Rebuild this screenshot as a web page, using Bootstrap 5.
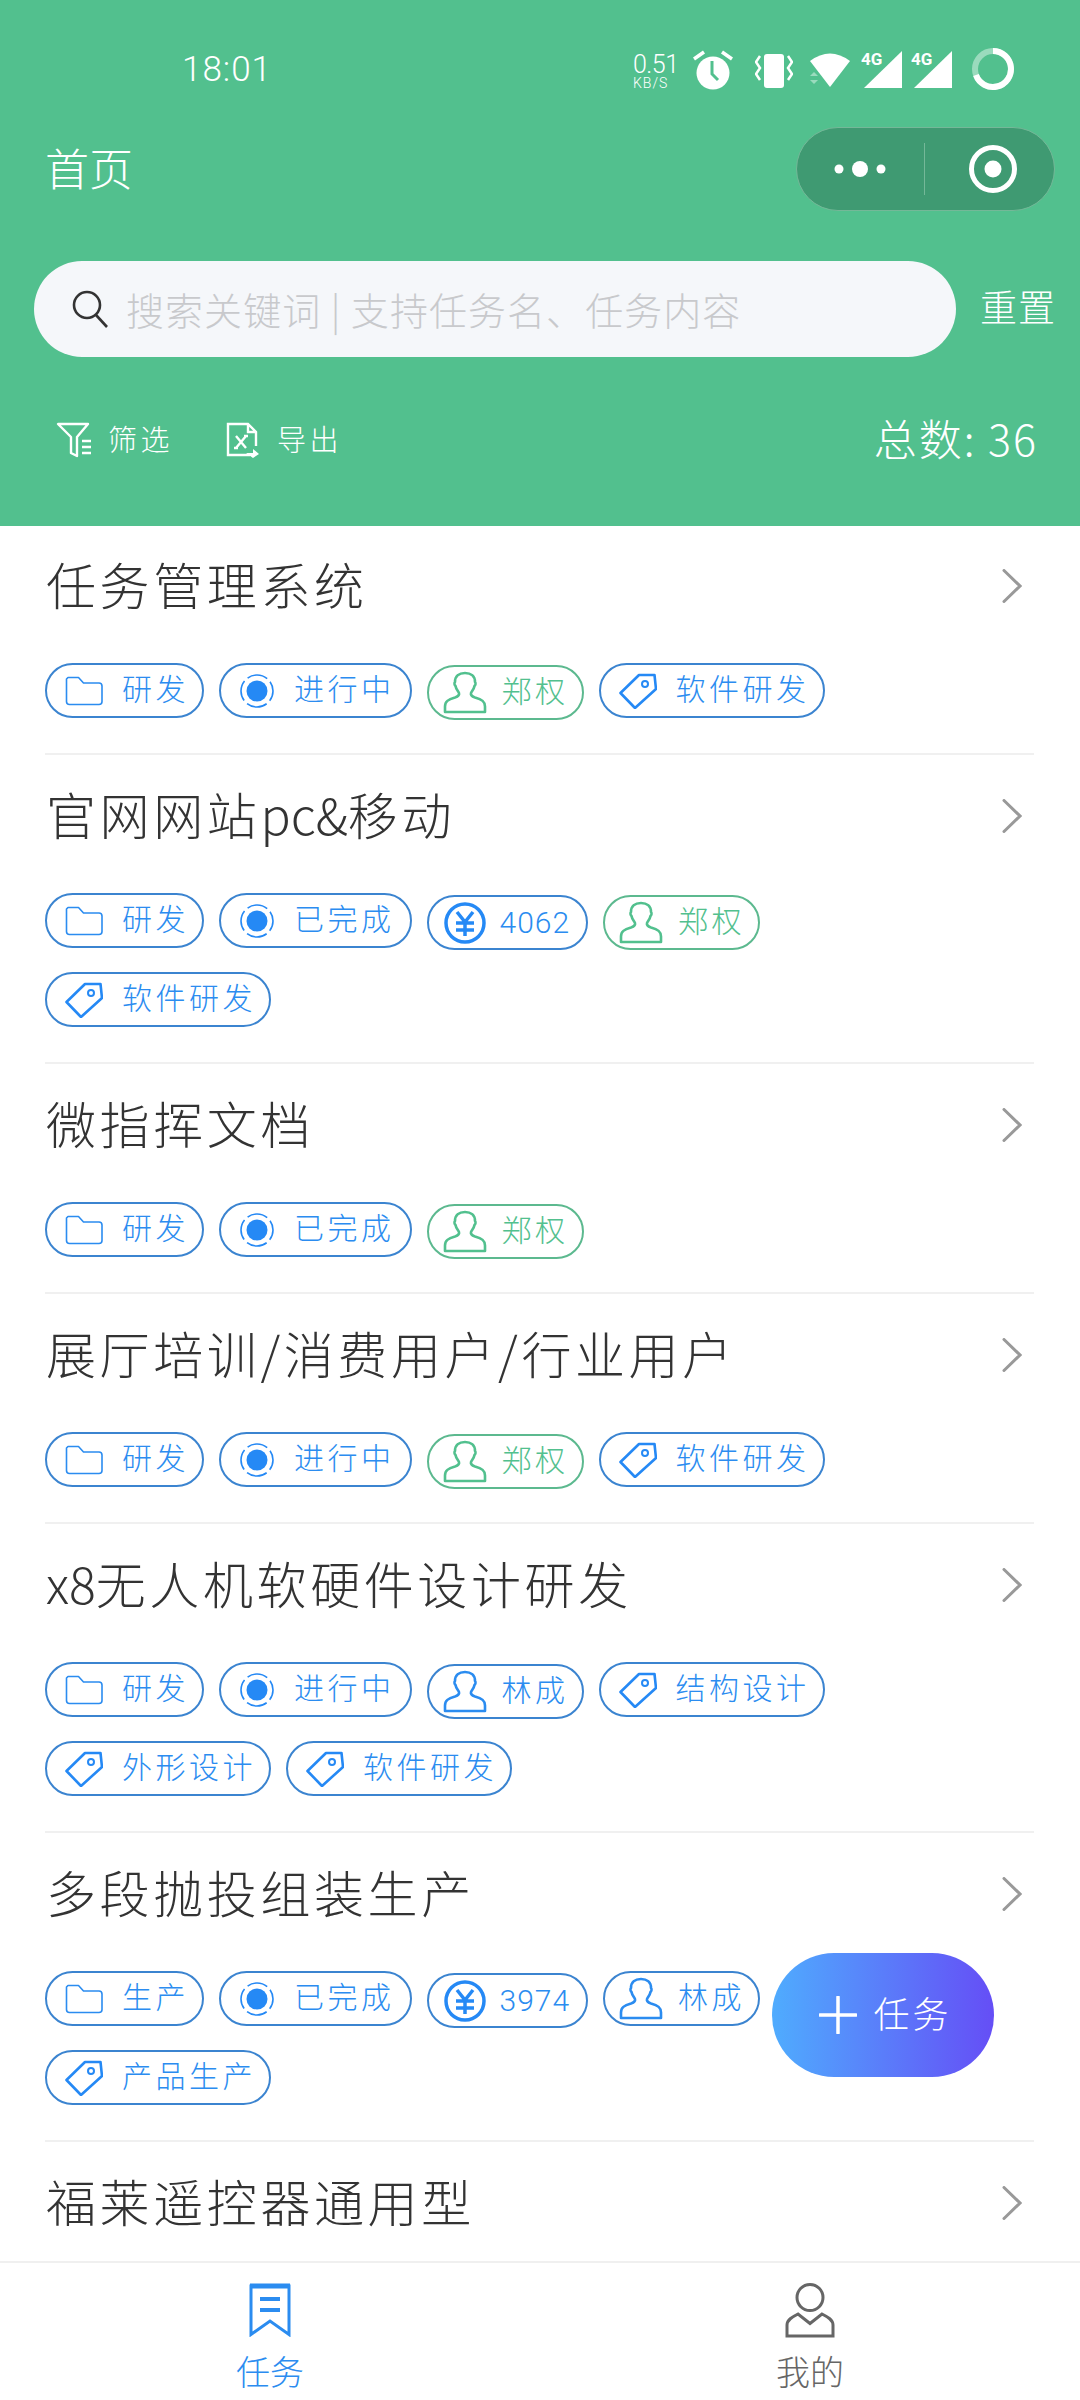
<!DOCTYPE html>
<html lang="zh"><head><meta charset="utf-8"><title>首页</title>
<link href="https://cdn.jsdelivr.net/npm/bootstrap@5.3.0/dist/css/bootstrap.min.css" rel="stylesheet">
<style>
html,body{height:2400px;overflow:hidden}
body{font-family:"Noto Sans CJK SC","Noto Sans",sans-serif;font-weight:300;background:#fff;color:#333}
.app{height:2400px;width:1080px;position:relative}
.hero{height:526px;background:#52c08e;color:#fff;flex:none;position:relative;z-index:2}
.sbar{height:127px;padding:50px 0 0 182px;align-items:flex-start}
.clock{font:300 35px/38px Roboto,sans-serif;letter-spacing:1px;width:451px;margin-top:1px}
.speed{width:60px;font-family:Roboto,sans-serif;line-height:1;text-align:left;margin-top:2px}
.speed b{display:block;font-weight:300;font-size:25px;letter-spacing:-.5px;height:24px}
.speed i{display:block;font-style:normal;font-size:14px;letter-spacing:1px;font-weight:300}
.st-vib{margin:3px 0 0 22px}
.st-wifi{margin:2px 0 0 16px}
.st-sig1{margin-left:10px}
.st-sig2{margin-left:8px}
.st-ring{margin:-3px 0 0 18px}
.navline{height:84px;padding:0 25px 0 45px}
.pagename{font-size:44px;line-height:60px;margin-top:-5px}
.capsule{width:259px;height:84px;background:#3f9a72;border:1px solid #74b898;border-radius:42px}
.capsule svg{display:block}
.searchline{margin-top:50px;padding:0 24px 0 34px;height:96px}
.searchbox{width:922px;height:96px;background:#f5f7fa;border-radius:48px;padding-left:38px;color:#c8c9cc;font-size:38px;line-height:96px}
.searchbox span{margin-left:18px;letter-spacing:1.05px}
.resetbtn{font-size:37px;letter-spacing:1px;margin-top:-4px}
.toolline{margin-top:61px;padding:0 42px 0 56px;height:44px}
.toolitem{font-size:29px;letter-spacing:3.5px;line-height:44px;padding-bottom:4px;margin-left:16px}
.tool-exp{margin-left:53px}
.tool-exp + .toolitem{margin-left:17px}
.totalnum{font-size:43px;line-height:50px;letter-spacing:2px;padding-bottom:6px}
.tasklist{flex:1 1 0;min-height:0;overflow:hidden;margin-top:-1px;padding:0 46px 0 45px}
.taskitem{border-bottom:2px solid #f0f0f0;padding:22px 0 35px}
.taskhead{height:72px;margin-bottom:44px}
.taskhead svg{margin:6px 12px 0 0;flex:none}
.taskname{font-size:50px;line-height:72px;letter-spacing:3.6px;color:#333;white-space:nowrap;padding-left:1px}
.taskname em{font-style:normal;letter-spacing:0}
.tagwrap{display:flex;flex-wrap:wrap;column-gap:15px;row-gap:24px;align-items:flex-start;width:950px}
.chip{height:55px;border:2px solid #3b84d0;border-radius:28px;color:#2b8cf0;display:inline-flex;align-items:center;font-size:30px;letter-spacing:3.5px;padding:0 13px 0 18px;white-space:nowrap;line-height:1}
.chip svg{flex:none;margin-right:19px}
.chip span{position:relative;top:-4px}
.chip.stat{padding-right:15px}
.chip.who{padding-left:14px}
.chip.who svg{margin-right:15px}
.chip.cost{padding-left:15px;padding-right:16px}
.chip.cost svg{margin-right:14px}
.chip.cost span{font-family:Roboto,sans-serif;letter-spacing:1px;top:0}
.chip.low{margin-top:2px;margin-bottom:-2px}
.chip.mate{border-color:#5cb98f;color:#52c08e}
.tabbar{height:139px;flex:none;border-top:2px solid #f0f0f0;background:#fff}
.tabcell{padding-top:20px;font-size:34px;line-height:36px;color:#666}
.tabcell.on{color:#2b8cf0}
.tabcell div{margin-top:14px}
.tabcell.on div{margin-top:16px}
.fabbtn{position:absolute;left:772px;top:1953px;width:222px;height:124px;border-radius:62px;background:linear-gradient(90deg,#4facfe,#654ef6);color:#fff;font-size:36px;letter-spacing:3px;z-index:3;padding-left:5px}
.fabbtn span{position:relative;top:-3px}
</style></head><body>
<svg width="0" height="0" class="position-absolute">
<defs>
<symbol id="i-folder" viewBox="0 0 38 30"><path d="M3 1.500h10.500l5 5.500H34a3 3 0 0 1 3 3v15.500a3 3 0 0 1-3 3H4.500a3 3 0 0 1-3-3V3z" fill="none" stroke="currentColor" stroke-width="1.600" stroke-linejoin="round"/></symbol>
<symbol id="i-status" viewBox="0 0 36 36"><circle cx="18" cy="18" r="10.500" fill="#2589f5"/><circle cx="18" cy="18" r="16" fill="none" stroke="#2589f5" stroke-width="1.600" stroke-dasharray="21 4.130" stroke-dashoffset="10.500"/></symbol>
<symbol id="i-user" viewBox="0 0 44 44"><path d="M22 2c6 0 10 3 10 9 1 1 .5 3-.5 4-.5 3-2.500 5-3.500 7-.5 2 1 3.500 4 4.500 7 2 10 4 10 9V41H2v-5.500c0-5 3-7 10-9 3-1 4.500-2.500 4-4.500-1-2-3-4-3.500-7-1-1-1.500-3-.5-4 0-6 4-9 10-9z" fill="none" stroke="currentColor" stroke-width="2.600" stroke-linejoin="round"/></symbol>
<symbol id="i-tag" viewBox="0 0 38 36"><path d="M1.500 20L20 2h15.500L37 16 16 35z" fill="none" stroke="#2589f5" stroke-width="2.600" stroke-linejoin="round"/><circle cx="26" cy="11" r="3" fill="none" stroke="#2589f5" stroke-width="2"/></symbol>
<symbol id="i-money" viewBox="0 0 42 42"><circle cx="21" cy="21" r="19" fill="none" stroke="#2589f5" stroke-width="3.500"/><path d="M13 10l8 10 8-10M12 21h18M12 28h18M21 20v14" fill="none" stroke="#2589f5" stroke-width="3.500"/></symbol>
<symbol id="i-chev" viewBox="0 0 20 34"><path d="M2 1.500l16 15.500L2 32.500" fill="none" stroke="#999" stroke-width="3" stroke-linecap="round"/></symbol>
</defs></svg>
<div class="app d-flex flex-column">
<div class="hero">
 <div class="sbar d-flex">
  <div class="clock">18:01</div>
  <div class="speed"><b>0.51</b><i>KB/S</i></div>
  <svg width="40" height="40" viewBox="0 0 40 40"><circle cx="20" cy="23" r="16.500" fill="#fff"/><path d="M1 9l10-7M39 9L29 2" stroke="#fff" stroke-width="3.500"/><path d="M19 11v13l6 6" stroke="#52c08e" stroke-width="3" fill="none"/></svg>
  <svg class="st-vib" width="38" height="36" viewBox="0 0 38 36"><rect x="9" y="1" width="20" height="34" rx="3" fill="#fff"/><path d="M5 3L1 9l4 6-4 6 4 6M33 3l4 6-4 6 4 6-4 6" fill="none" stroke="#fff" stroke-width="2.500"/></svg>
  <svg class="st-wifi" width="42" height="36" viewBox="0 0 42 36"><path d="M1 9Q21-6 41 9L21 35z" fill="#fff"/><path d="M1 24h8l-4-4zM1 28h8l-4 4z" fill="#9adbbd"/></svg>
  <svg class="st-sig1" width="42" height="40" viewBox="0 0 42 40"><path d="M41 1v37H3z" fill="#fff"/><text x="0" y="15" fill="#fff" font-family="Roboto" font-weight="700" font-size="17">4G</text></svg>
  <svg class="st-sig2" width="42" height="40" viewBox="0 0 42 40"><path d="M41 1v37H3z" fill="#fff"/><text x="0" y="15" fill="#fff" font-family="Roboto" font-weight="700" font-size="17">4G</text></svg>
  <svg class="st-ring" width="44" height="44" viewBox="0 0 44 44"><circle cx="22" cy="22" r="18" fill="none" stroke="#9adbbd" stroke-width="6"/><path d="M22 4a18 18 0 1 1-17 24" fill="none" stroke="#fff" stroke-width="6"/></svg>
 </div>
 <div class="navline d-flex justify-content-between align-items-center">
  <div class="pagename">首页</div>
  <div class="capsule d-flex align-items-center">
   <svg width="128" height="82" viewBox="0 0 128 82"><circle cx="42" cy="41" r="4.500" fill="#fff"/><circle cx="63" cy="41" r="8" fill="#fff"/><circle cx="84" cy="41" r="4.500" fill="#fff"/><path d="M127.500 15v52" stroke="#74b898"/></svg>
   <svg width="128" height="82" viewBox="0 0 128 82"><circle cx="68" cy="41" r="21.500" fill="none" stroke="#fff" stroke-width="5"/><circle cx="68" cy="41" r="8.500" fill="#fff"/></svg>
  </div>
 </div>
 <div class="searchline d-flex justify-content-between align-items-center">
  <div class="searchbox d-flex">
   <svg width="36" height="38" viewBox="0 0 36 38" class="align-self-center"><circle cx="15" cy="15" r="13" fill="none" stroke="#333" stroke-width="2.600"/><path d="M24 25l11 12" stroke="#333" stroke-width="2.600"/></svg>
   <span>搜索关键词 | 支持任务名、任务内容</span>
  </div>
  <div class="resetbtn">重置</div>
 </div>
 <div class="toolline d-flex align-items-center">
  <svg width="36" height="36" viewBox="0 0 36 36"><path d="M2 2h30L21 15v19l-6-3V15z" fill="none" stroke="#fff" stroke-width="2.400" stroke-linejoin="round"/><path d="M26 19h9M26 25h9M26 31h9" stroke="#fff" stroke-width="2.400"/></svg>
  <div class="toolitem">筛选</div>
  <svg class="tool-exp" width="34" height="36" viewBox="0 0 34 36"><path d="M24 33H2V2h20l8 8v14M22 2v8h8" fill="none" stroke="#fff" stroke-width="2.400"/><path d="M10 14l10 12M20 14L10 26M8 26h4M18 14h4" stroke="#fff" stroke-width="2.400" fill="none"/><path d="M20 31h7v-4l6 5-6 4z" fill="#fff"/></svg>
  <div class="toolitem">导出</div>
  <div class="totalnum ms-auto">总数: 36</div>
 </div>
</div>
<div class="tasklist">
 <div class="taskitem">
  <div class="taskhead d-flex justify-content-between align-items-center"><div class="taskname">任务管理系统</div><svg width="20" height="34"><use href="#i-chev"/></svg></div>
  <div class="tagwrap">
   <div class="chip"><svg width="38" height="30"><use href="#i-folder"/></svg><span>研发</span></div>
   <div class="chip stat"><svg width="36" height="36"><use href="#i-status"/></svg><span>进行中</span></div>
   <div class="chip who low mate"><svg width="44" height="44"><use href="#i-user"/></svg><span>郑权</span></div>
   <div class="chip"><svg width="38" height="36"><use href="#i-tag"/></svg><span>软件研发</span></div>
  </div>
 </div>
 <div class="taskitem">
  <div class="taskhead d-flex justify-content-between align-items-center"><div class="taskname">官网网站<em>pc&amp;</em>移动</div><svg width="20" height="34"><use href="#i-chev"/></svg></div>
  <div class="tagwrap">
   <div class="chip"><svg width="38" height="30"><use href="#i-folder"/></svg><span>研发</span></div>
   <div class="chip stat"><svg width="36" height="36"><use href="#i-status"/></svg><span>已完成</span></div>
   <div class="chip cost low"><svg width="42" height="42"><use href="#i-money"/></svg><span>4062</span></div>
   <div class="chip who low mate"><svg width="44" height="44"><use href="#i-user"/></svg><span>郑权</span></div>
   <div class="chip"><svg width="38" height="36"><use href="#i-tag"/></svg><span>软件研发</span></div>
  </div>
 </div>
 <div class="taskitem">
  <div class="taskhead d-flex justify-content-between align-items-center"><div class="taskname">微指挥文档</div><svg width="20" height="34"><use href="#i-chev"/></svg></div>
  <div class="tagwrap">
   <div class="chip"><svg width="38" height="30"><use href="#i-folder"/></svg><span>研发</span></div>
   <div class="chip stat"><svg width="36" height="36"><use href="#i-status"/></svg><span>已完成</span></div>
   <div class="chip who low mate"><svg width="44" height="44"><use href="#i-user"/></svg><span>郑权</span></div>
  </div>
 </div>
 <div class="taskitem">
  <div class="taskhead d-flex justify-content-between align-items-center"><div class="taskname">展厅培训/消费用户/行业用户</div><svg width="20" height="34"><use href="#i-chev"/></svg></div>
  <div class="tagwrap">
   <div class="chip"><svg width="38" height="30"><use href="#i-folder"/></svg><span>研发</span></div>
   <div class="chip stat"><svg width="36" height="36"><use href="#i-status"/></svg><span>进行中</span></div>
   <div class="chip who low mate"><svg width="44" height="44"><use href="#i-user"/></svg><span>郑权</span></div>
   <div class="chip"><svg width="38" height="36"><use href="#i-tag"/></svg><span>软件研发</span></div>
  </div>
 </div>
 <div class="taskitem">
  <div class="taskhead d-flex justify-content-between align-items-center"><div class="taskname"><em>x8</em>无人机软硬件设计研发</div><svg width="20" height="34"><use href="#i-chev"/></svg></div>
  <div class="tagwrap">
   <div class="chip"><svg width="38" height="30"><use href="#i-folder"/></svg><span>研发</span></div>
   <div class="chip stat"><svg width="36" height="36"><use href="#i-status"/></svg><span>进行中</span></div>
   <div class="chip who low"><svg width="44" height="44"><use href="#i-user"/></svg><span>林成</span></div>
   <div class="chip"><svg width="38" height="36"><use href="#i-tag"/></svg><span>结构设计</span></div>
   <div class="chip"><svg width="38" height="36"><use href="#i-tag"/></svg><span>外形设计</span></div>
   <div class="chip"><svg width="38" height="36"><use href="#i-tag"/></svg><span>软件研发</span></div>
  </div>
 </div>
 <div class="taskitem">
  <div class="taskhead d-flex justify-content-between align-items-center"><div class="taskname">多段抛投组装生产</div><svg width="20" height="34"><use href="#i-chev"/></svg></div>
  <div class="tagwrap">
   <div class="chip"><svg width="38" height="30"><use href="#i-folder"/></svg><span>生产</span></div>
   <div class="chip stat"><svg width="36" height="36"><use href="#i-status"/></svg><span>已完成</span></div>
   <div class="chip cost low"><svg width="42" height="42"><use href="#i-money"/></svg><span>3974</span></div>
   <div class="chip who"><svg width="44" height="44"><use href="#i-user"/></svg><span>林成</span></div>
   <div class="chip"><svg width="38" height="36"><use href="#i-tag"/></svg><span>产品生产</span></div>
  </div>
 </div>
 <div class="taskitem">
  <div class="taskhead d-flex justify-content-between align-items-center"><div class="taskname">福莱遥控器通用型</div><svg width="20" height="34"><use href="#i-chev"/></svg></div>
 </div>
</div>
<div class="tabbar row g-0 text-center">
 <div class="col-6 tabcell on"><svg width="42" height="54" viewBox="0 0 42 54" class="d-block mx-auto"><path d="M2 3v48.500L21 38l19 13.500V3z" fill="none" stroke="#2b8cf0" stroke-width="3"/><path d="M1 3h40" stroke="#2b8cf0" stroke-width="5"/><path d="M11 16h20M11 27h20" stroke="#2b8cf0" stroke-width="4"/></svg><div>任务</div></div>
 <div class="col-6 tabcell"><svg width="50" height="56" viewBox="0 0 50 56" class="d-block mx-auto"><ellipse cx="25" cy="14.500" rx="13" ry="13" fill="none" stroke="#666" stroke-width="3"/><path d="M2 53V42c0-5 5-8 11-11l12 9.500L37 31c6 3 11 6 11 11v11z" fill="none" stroke="#666" stroke-width="3"/></svg><div>我的</div></div>
</div>
<div class="fabbtn d-flex align-items-center justify-content-center"><svg width="38" height="38" viewBox="0 0 38 38" class="me-3"><path d="M19 1v36M1 19h36" stroke="#fff" stroke-width="3.500" stroke-linecap="round"/></svg><span>任务</span></div>
</div>
</body></html>
